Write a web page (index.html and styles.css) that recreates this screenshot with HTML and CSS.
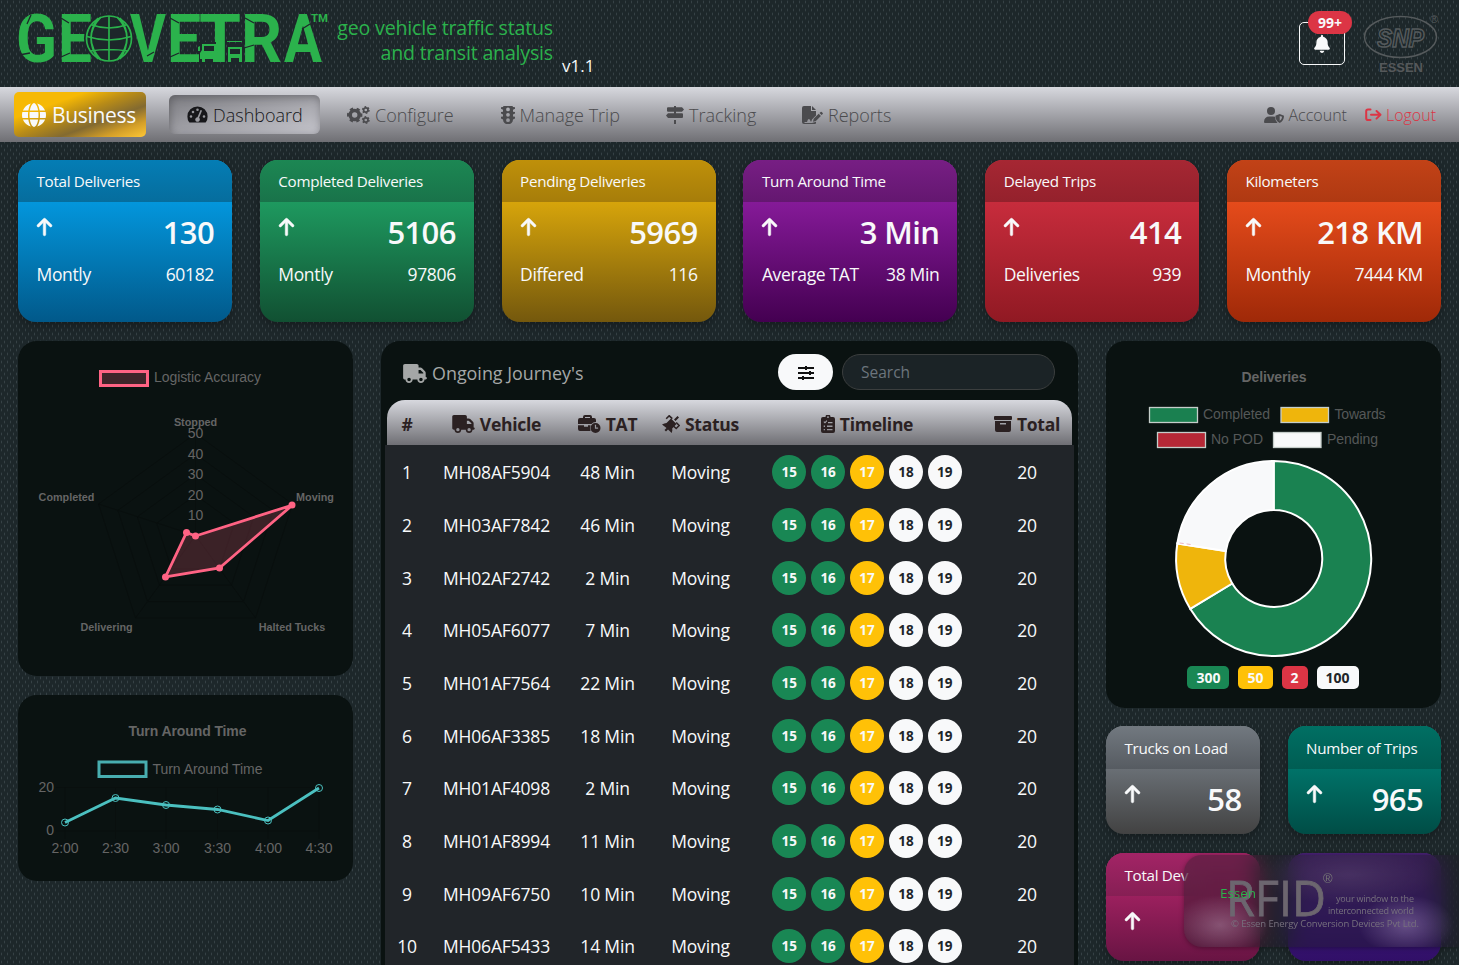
FILE: index.html
```html
<!DOCTYPE html>
<html lang="en">
<head>
<meta charset="utf-8">
<title>Geovetra Dashboard</title>
<link rel="stylesheet" href="styles.css">
</head>
<body>
<svg class="sprite" aria-hidden="true">
  <symbol id="truck" viewBox="0 0 640 512"><path d="M48 0C21.500 0 0 21.500 0 48V368c0 26.500 21.500 48 48 48H64c0 53 43 96 96 96s96-43 96-96H384c0 53 43 96 96 96s96-43 96-96h32c17.700 0 32-14.300 32-32s-14.300-32-32-32V288 256 237.300c0-17-6.700-33.300-18.700-45.300L512 114.700c-12-12-28.300-18.700-45.300-18.700H416V48c0-26.500-21.500-48-48-48H48zM416 160h50.700L544 237.300V256H416V160zM112 416a48 48 0 1 1 96 0 48 48 0 1 1 -96 0zm368-48a48 48 0 1 1 0 96 48 48 0 1 1 0-96z"/></symbol>
  <symbol id="bell" viewBox="0 0 448 512"><path d="M224 0c-17.700 0-32 14.300-32 32V51.200C119 66 64 130.600 64 208v18.800c0 47-17.300 92.400-48.500 127.600l-7.400 8.300c-8.400 9.400-10.400 22.900-5.300 34.400S19.400 416 32 416H416c12.600 0 24-7.400 29.200-18.900s3.100-25-5.300-34.400l-7.400-8.300C401.300 319.200 384 273.900 384 226.800V208c0-77.400-55-142-128-156.800V32c0-17.700-14.300-32-32-32zm45.300 493.300c12-12 18.700-28.300 18.700-45.300H160c0 17 6.700 33.300 18.700 45.300s28.300 18.700 45.300 18.700s33.300-6.700 45.300-18.700z"/></symbol>
  <symbol id="up" viewBox="0 0 384 512"><path stroke="currentColor" stroke-width="14" d="M214.600 41.400c-12.500-12.500-32.800-12.500-45.300 0l-160 160c-12.500 12.500-12.500 32.800 0 45.300s32.800 12.500 45.300 0L160 141.200V448c0 17.700 14.300 32 32 32s32-14.300 32-32V141.200L329.400 246.600c12.500 12.500 32.800 12.500 45.300 0s12.500-32.800 0-45.300l-160-160z"/></symbol>
  <symbol id="globe" viewBox="0 0 512 512"><path d="M352 256c0 22.200-1.200 43.600-3.300 64H163.300c-2.200-20.400-3.300-41.800-3.300-64s1.200-43.600 3.300-64H348.700c2.200 20.400 3.300 41.800 3.300 64zm28.800-64H503.900c5.300 20.500 8.100 41.900 8.100 64s-2.800 43.500-8.100 64H380.800c2.100-20.600 3.200-42 3.200-64s-1.100-43.400-3.200-64zm112.600-32H376.700c-10-63.900-29.800-117.400-55.300-151.600c78.300 20.700 142 77.500 171.900 151.600zm-149.100 0H167.700c6.100-36.400 15.500-68.600 27-94.700c10.500-23.600 22.200-40.700 33.500-51.500C239.400 3.200 248.700 0 256 0s16.600 3.200 27.800 13.800c11.300 10.800 23 27.900 33.500 51.500c11.600 26 20.900 58.200 27 94.700zm-209 0H18.600C48.600 85.900 112.200 29.100 190.600 8.400C165.100 42.600 145.300 96.100 135.300 160zM8.100 192H131.200c-2.100 20.600-3.200 42-3.200 64s1.100 43.400 3.200 64H8.100C2.800 299.500 0 278.100 0 256s2.800-43.500 8.100-64zM194.700 446.600c-11.600-26-20.900-58.200-27-94.600H344.300c-6.100 36.400-15.500 68.600-27 94.600c-10.500 23.600-22.200 40.700-33.500 51.500C272.600 508.800 263.300 512 256 512s-16.600-3.200-27.800-13.800c-11.300-10.800-23-27.900-33.500-51.500zM135.300 352c10 63.900 29.800 117.400 55.300 151.600C112.200 482.900 48.600 426.100 18.600 352H135.300zm358.100 0c-30 74.100-93.600 130.900-171.900 151.600c25.500-34.200 45.200-87.700 55.300-151.600H493.400z"/></symbol>
  <symbol id="gauge" viewBox="0 0 21 17"><path fill-rule="evenodd" d="M2 16Q.4 13.800.4 10.500a10.100 10.100 0 0 1 20.200 0q0 3.300-1.600 5.500-.4.500-1 .500H3q-.6 0-1-.5zM4 9.200a1.300 1.300 0 1 0 0 2.600 1.300 1.300 0 0 0 0-2.600zm2-4.500a1.300 1.300 0 1 0 0 2.600 1.300 1.300 0 0 0 0-2.600zm4.500-2.200a1.300 1.300 0 1 0 0 2.600 1.300 1.300 0 0 0 0-2.600zM17 9.200a1.300 1.300 0 1 0 0 2.600 1.300 1.300 0 0 0 0-2.600zM13.500 4l-3 7.200a2.300 2.300 0 1 0 1.600.6l3-7.200z"/></symbol>
  <symbol id="gears" viewBox="0 0 23 18"><circle cx="7.700" cy="9" r="4.500" fill="none" stroke="currentColor" stroke-width="3.600"/><circle cx="7.700" cy="9" r="6.600" fill="none" stroke="currentColor" stroke-width="2.200" stroke-dasharray="3.450 3.460" stroke-dashoffset="1.700"/><g fill="none" stroke="currentColor"><circle cx="18.800" cy="4" r="2.200" stroke-width="1.700"/><circle cx="18.800" cy="4" r="3.200" stroke-width="1.400" stroke-dasharray="1.680 1.670"/><circle cx="18.800" cy="14" r="2.200" stroke-width="1.700"/><circle cx="18.800" cy="14" r="3.200" stroke-width="1.400" stroke-dasharray="1.680 1.670"/></g></symbol>
  <symbol id="light" viewBox="0 0 14 18"><path fill-rule="evenodd" d="M3 0h8q1 0 1 1l2 .2v1.600l-2 1v2l2 .2v1.600l-2 1v2l2 .2v1.600l-2 1A5 5 0 0 1 2 13.400l-2-1v-1.600l2-.2v-2l-2-1V6l2-.2v-2l-2-1V1.200L2 1q0-1 1-1zm4 1.500a1.900 1.900 0 1 0 0 3.800 1.900 1.900 0 0 0 0-3.800zm0 5.400a1.900 1.900 0 1 0 0 3.800 1.900 1.900 0 0 0 0-3.800zm0 5.400a1.900 1.900 0 1 0 0 3.800 1.900 1.900 0 0 0 0-3.800z"/></symbol>
  <symbol id="sign" viewBox="0 0 18 18"><path d="M8 0h2v1.200h6L18 3.500 16 5.800h-14q-1 0-1-1V2.200q0-1 1-1h6zM8 5.800h2v1.500h6q1 0 1 1v2.600q0 1-1 1H2L0 9.600 2 7.300h6zM8 14h2v4H8z"/></symbol>
  <symbol id="report" viewBox="0 0 21 18"><path d="M2 0h7v5h5v4.500l-4 4-.7 2H8.600q-.4-2.600-1.800-2.500Q5.800 13 5 16H2.500v1H10l4-1.200V17q0 1-1 1H2q-2 0-2-2V2Q0 0 2 0zm8 0 4 4h-4zm1.700 12.800 5-5 2.200 2.200-5 5-2.900.8zM17.500 7l1.200-1.100q.5-.4 1 0l1 1q.4.600 0 1L19.600 9z"/></symbol>
  <symbol id="user" viewBox="0 0 20 16"><circle cx="7" cy="4" r="4"/><path fill-rule="evenodd" d="M0 15Q.2 9.500 5.500 9.500H9q1.300 0 2 .3 0 3.500 2.500 6.200H1q-1 0-1-1zM15.700 7 20 8.700q0 5.200-4.300 7.300-4.300-2.100-4.300-7.300zm0 1.900v5q2.200-1.300 2.400-4.200z"/></symbol>
  <symbol id="exit" viewBox="0 0 17 14"><path fill="none" stroke="currentColor" stroke-width="2" stroke-linecap="round" stroke-linejoin="round" d="M5.500 1.500H3Q1.200 1.500 1.200 3.300v6.900Q1.200 12 3 12h2.500M6 6.800h9M11.500 3l4 3.800-4 3.800"/></symbol>
  <symbol id="case" viewBox="0 0 23 18"><path fill-rule="evenodd" d="M5 3V2q0-2 2-2h5q2 0 2 2v1h2q2 0 2 2v2q-3 .1-4.500 2H0V5q0-2 2-2zm2-1v1h5V2zM0 10.300h6v1.500h4v-1.500h2.500Q11.300 13 12.500 16H2q-2 0-2-2zM17.500 8a5 5 0 1 0 0 10 5 5 0 0 0 0-10zm-.6 1.800h1.200v2.800h2v1.200h-3.200z"/></symbol>
  <symbol id="satellite" viewBox="0 0 18 18"><path d="m4.500 8 4.500-4.500 5.500 5.500-4.300 4.500q.5 1.600-.5 4.500l-3.700-3.500-2 2-1.500-1.500 2-2L0 9.500Q2.500 8 4.500 8zM12 4.500 15.500 1 17 2.500 13.500 6z"/><path fill="none" stroke="currentColor" stroke-width="1.600" d="m4.200 3.800 3-3 3.100 2.900M14.200 7.500l3 3-3 3-2.800-2.500"/></symbol>
  <symbol id="clip" viewBox="0 0 14 18"><path fill-rule="evenodd" d="M2 2h2.500a2.500 2.500 0 0 1 5 0H12q2 0 2 2v12q0 2-2 2H2q-2 0-2-2V4q0-2 2-2zm5-.8A.9.9 0 1 0 7 3a.9.9 0 0 0 0-1.800zM2.500 7l1.500 1.500L6.300 6l-.8-.7L4 7l-.8-.8zM7 7v1.300h4.500V7zM2.700 10.500V12H4v-1.500zm3.300 0V12h5.500v-1.500zM2.700 13.900v1.400H4v-1.400zm3.300 0v1.400h5.500v-1.400z"/></symbol>
  <symbol id="archive" viewBox="0 0 18 16"><path fill-rule="evenodd" d="M1 0h16q1 0 1 1v2q0 1-1 1H1Q0 4 0 3V1q0-1 1-1zM1 5h16v9q0 2-2 2H3q-2 0-2-2zm5 2v1.500h6V7z"/></symbol>
  <symbol id="sliders" viewBox="0 0 16 14"><path fill="none" stroke="currentColor" stroke-width="2" d="M0 2h16M0 7h16M0 12h16"/><path d="M7 0h2v4H7zM11 5h2v4h-2zM4 10h2v4H4z"/></symbol>
</svg>

<header class="top">
  <svg class="logo" width="331" height="87" viewBox="0 0 331 87">
    <g class="logo-text">
      <text x="16" y="62" textLength="41" lengthAdjust="spacingAndGlyphs">G</text>
      <text x="58" y="62" textLength="34" lengthAdjust="spacingAndGlyphs">E</text>
      <text x="130" y="62" textLength="36" lengthAdjust="spacingAndGlyphs">V</text>
      <text x="167" y="62" textLength="34" lengthAdjust="spacingAndGlyphs">E</text>
      <text x="199" y="62" textLength="42" lengthAdjust="spacingAndGlyphs">T</text>
      <text x="241" y="62" textLength="41" lengthAdjust="spacingAndGlyphs">R</text>
      <text x="284" y="62" textLength="38" lengthAdjust="spacingAndGlyphs">A</text>
      <text class="tm" x="311" y="22" textLength="17" lengthAdjust="spacingAndGlyphs">TM</text>
    </g>
    <path class="cut" d="M27 24l4-9M19 55l11-2M61 18l8 5M61 57l9-4M147 56l7-4M170 18l9 5M170 57l9-4M245 18l9 5M302 29l8-5M254 45l-10 3"/>
    <circle class="cut-fill" cx="109" cy="38.500" r="25"/>
    <g class="globe-lines"><circle cx="109" cy="38.500" r="22.500"/><path d="M109 16v45M87 36.500q22 7 44 0M92 25q17 6 34 0M90 51q19-3 38 0M101 17q-20 21 0 43M117 17q20 21 0 43M98 18q-14 20 0 41M120 18q14 20 0 41"/></g>
    <path class="cut-fill" d="M199 42h17v22h-17zM227 44h16v20h-16z"/>
    <g class="logo-vehicles"><path fill-rule="evenodd" d="M202 44h14v6l2 3v6h-2v3h-3v-3h-8v3h-3v-3h-2v-6l2-3zm2 2v5h10v-5zM200 46v5h-2v-4zM228 47h14v15h-3v-4h-8v4h-3zm2 2v5h10v-5zM227 41h15v1h-15z"/></g>
  </svg>
  <p class="tagline">geo vehicle traffic status<br>and transit analysis</p>
  <span class="version">v1.1</span>
  <div class="top-end">
    <button class="bell"><svg width="16" height="18"><use href="#bell"/></svg><span class="bell-count">99+</span></button>
    <svg class="essen" width="80" height="66" viewBox="1362 10 80 66"><g fill="none" stroke="#555a5c" stroke-width="1.500"><ellipse cx="1400.500" cy="37" rx="36" ry="20.500"/><text x="1377" y="46.500" textLength="47" lengthAdjust="spacingAndGlyphs" class="snp">SNP</text></g><text class="reg" x="1430" y="23">®</text><text class="essen-name" x="1379" y="72" textLength="44">ESSEN</text></svg>
  </div>
</header>

<nav class="nav">
  <a class="brand"><svg width="24" height="24"><use href="#globe"/></svg>Business</a>
  <div class="menu">
    <a class="item active"><svg width="21" height="17"><use href="#gauge"/></svg>Dashboard</a>
    <a class="item"><svg width="23" height="18"><use href="#gears"/></svg>Configure</a>
    <a class="item"><svg width="14" height="18"><use href="#light"/></svg>Manage Trip</a>
    <a class="item"><svg width="18" height="18"><use href="#sign"/></svg>Tracking</a>
    <a class="item"><svg width="21" height="18"><use href="#report"/></svg>Reports</a>
  </div>
  <div class="session">
    <a><svg width="20" height="16"><use href="#user"/></svg>Account</a>
    <a class="logout"><svg width="17" height="14"><use href="#exit"/></svg>Logout</a>
  </div>
</nav>

<main>
  <section class="stats">
    <article class="stat blue"><h2>Total Deliveries</h2><div class="big"><svg class="arrow"><use href="#up"/></svg><b>130</b></div><div class="sub"><span>Montly</span><span>60182</span></div></article>
    <article class="stat green"><h2>Completed Deliveries</h2><div class="big"><svg class="arrow"><use href="#up"/></svg><b>5106</b></div><div class="sub"><span>Montly</span><span>97806</span></div></article>
    <article class="stat gold"><h2>Pending Deliveries</h2><div class="big"><svg class="arrow"><use href="#up"/></svg><b>5969</b></div><div class="sub"><span>Differed</span><span>116</span></div></article>
    <article class="stat purple"><h2>Turn Around Time</h2><div class="big"><svg class="arrow"><use href="#up"/></svg><b>3 Min</b></div><div class="sub"><span>Average TAT</span><span>38 Min</span></div></article>
    <article class="stat red"><h2>Delayed Trips</h2><div class="big"><svg class="arrow"><use href="#up"/></svg><b>414</b></div><div class="sub"><span>Deliveries</span><span>939</span></div></article>
    <article class="stat orange"><h2>Kilometers</h2><div class="big"><svg class="arrow"><use href="#up"/></svg><b>218 KM</b></div><div class="sub"><span>Monthly</span><span>7444 KM</span></div></article>
  </section>

  <section class="board">
    <div class="column">
      <div class="panel">
        <svg class="chart" width="335" height="335" viewBox="18 341 335 335">
          <rect x="100.500" y="371.500" width="47" height="14" fill="#3f252a" stroke="#ff6384" stroke-width="3"/>
          <text x="154" y="382" textLength="107">Logistic Accuracy</text>
          <g class="grid"><path d="M195.500 433.500l97 70.500-37 114h-120l-37-114zM195.500 454l77.600 56.400-29.600 91.200h-96l-29.600-91.200zM195.500 474.500l58.200 42.300-22.200 68.400h-72l-22.200-68.400zM195.500 495l38.800 28.200-14.800 45.600h-48l-14.800-45.600zM195.500 535.500v-102M195.500 535.500l97-31.500M195.500 535.500l60 82.500M195.500 535.500l-60 82.500M195.500 535.500l-97-31.500"/></g>
          <path d="M195.500 536 292.500 505 219.500 568 165.500 577 186.500 532.500z" fill="#ff6384" fill-opacity=".2" stroke="#ff6384" stroke-width="2.800"/>
          <g fill="#ff6384"><circle cx="195.500" cy="536" r="3.500"/><circle cx="292" cy="505" r="3.500"/><circle cx="219.500" cy="568" r="3.500"/><circle cx="165.500" cy="577" r="3.500"/><circle cx="186.500" cy="532.500" r="3.500"/></g>
          <g text-anchor="middle"><text x="195.500" y="438">50</text><text x="195.500" y="458.500">40</text><text x="195.500" y="479">30</text><text x="195.500" y="499.500">20</text><text x="195.500" y="519.500">10</text></g>
          <g class="point" text-anchor="middle"><text x="195.500" y="426">Stopped</text><text x="315" y="500.500">Moving</text><text x="292" y="631">Halted Tucks</text><text x="106.500" y="631">Delivering</text><text x="66.500" y="500.500">Completed</text></g>
        </svg>
      </div>
      <div class="panel">
        <svg class="chart" width="335" height="186" viewBox="18 695 335 186">
          <text class="title" x="128.500" y="736" textLength="118">Turn Around Time</text>
          <rect x="99" y="762" width="47" height="14.500" fill="none" stroke="#48aeb0" stroke-width="3"/>
          <text x="152.500" y="773.500" textLength="110">Turn Around Time</text>
          <g class="grid"><path d="M56 787.500h263M56 831h263M65 787v52M115.500 787v52M166 787v52M217.500 787v52M268 787v52M319 787v52"/></g>
          <path d="M65 822.500 115.500 798 166 805 217.500 809.500 268 820.500 319 788" fill="none" stroke="#4bc0c0" stroke-width="2.800"/>
          <g fill="none" stroke="#4bc0c0"><circle cx="65" cy="822.500" r="3.500"/><circle cx="115.500" cy="798" r="3.500"/><circle cx="166" cy="805" r="3.500"/><circle cx="217.500" cy="809.500" r="3.500"/><circle cx="268" cy="820.500" r="3.500"/><circle cx="319" cy="788" r="3.500"/></g>
          <g text-anchor="end"><text x="54" y="791.500">20</text><text x="54" y="834.500">0</text></g>
          <g text-anchor="middle"><text x="65" y="853">2:00</text><text x="115.500" y="853">2:30</text><text x="166" y="853">3:00</text><text x="217.500" y="853">3:30</text><text x="268.500" y="853">4:00</text><text x="319" y="853">4:30</text></g>
        </svg>
      </div>
    </div>

    <div class="panel journeys">
      <div class="journeys-head">
        <h3><svg width="24" height="19"><use href="#truck"/></svg>Ongoing Journey's</h3>
        <button class="filter"><svg width="16" height="14"><use href="#sliders"/></svg></button>
        <input class="search" placeholder="Search">
      </div>
      <div class="row head">
        <span>#</span>
        <span><svg width="23" height="18"><use href="#truck"/></svg>Vehicle</span>
        <span><svg width="23" height="18"><use href="#case"/></svg>TAT</span>
        <span><svg width="18" height="18"><use href="#satellite"/></svg>Status</span>
        <span><svg width="14" height="18"><use href="#clip"/></svg>Timeline</span>
        <span><svg width="18" height="16"><use href="#archive"/></svg>Total</span>
      </div>
      <div class="rows" id="rows"></div>
    </div>

    <div class="column">
      <div class="panel">
        <svg class="chart" width="335" height="325" viewBox="1106 341 335 325">
          <text class="title" x="1241.500" y="382" textLength="65">Deliveries</text>
          <g stroke="#c5cdca" stroke-width="1.300"><rect x="1149.500" y="407.500" width="48" height="15" fill="#1a8050"/><rect x="1281" y="407.500" width="47.500" height="15" fill="#efb50c"/><rect x="1157.500" y="432.500" width="48" height="15" fill="#b52836"/><rect x="1273.500" y="432.500" width="47.500" height="15" fill="#f8f9fa"/></g>
          <g class="legend"><text x="1203" y="419" textLength="67">Completed</text><text x="1334.500" y="419" textLength="51">Towards</text><text x="1211" y="444" textLength="52">No POD</text><text x="1327" y="444" textLength="51">Pending</text></g>
          <g transform="translate(1273.700 558.500)" stroke="#fff" stroke-width="2">
            <path fill="#1a8251" d="M0-97.500A97.500 97.500 0 1 1-83.500 50.300L-41.500 25A48.500 48.500 0 1 0 0-48.500z"/>
            <path fill="#efb50c" d="M-83.500 50.300A97.500 97.500 0 0 1-96.400-15L-47.900-7.400A48.500 48.500 0 0 0-41.500 25z"/>
            <path fill="#f8f9fa" d="M-96.400-15A97.500 97.500 0 0 1 0-97.500V-48.500A48.500 48.500 0 0 0-47.900-7.400z"/>
            <path fill="none" stroke="#e8a0a8" stroke-width=".8" stroke-dasharray="4 3" d="M-94-15.500-83-14"/>
          </g>
        </svg>
        <div class="badges"><b class="bg-green">300</b><b class="bg-yellow">50</b><b class="bg-red">2</b><b class="bg-light">100</b></div>
      </div>
      <div class="minis">
        <article class="stat mini gray"><h2>Trucks on Load</h2><div class="big"><svg class="arrow"><use href="#up"/></svg><b>58</b></div></article>
        <article class="stat mini teal"><h2>Number of Trips</h2><div class="big"><svg class="arrow"><use href="#up"/></svg><b>965</b></div></article>
        <article class="stat mini pink"><h2>Total Dev</h2><div class="big"><svg class="arrow"><use href="#up"/></svg></div></article>
        <article class="stat mini violet"><h2></h2></article>
      </div>
    </div>
  </section>
</main>

<footer class="credit">
  <svg width="275" height="92" viewBox="1184 855 275 92">
    <text class="rfid" x="1226" y="916" textLength="100" lengthAdjust="spacingAndGlyphs">RFID</text>
    <text class="rfid-reg" x="1323" y="883">®</text>
    <text class="essen-green" x="1220" y="898" textLength="36">Essen</text>
    <g class="slogan"><text x="1336" y="902" textLength="78">your window to the</text><text x="1328" y="913.500" textLength="86">interconnected world</text></g>
    <text class="copy" x="1231" y="927" textLength="188">© Essen Energy Conversion Devices Pvt Ltd.</text>
  </svg>
</footer>
<script src="app.js"></script>
</body>
</html>
```

FILE: styles.css
```css
* { box-sizing: border-box; }
body {
  margin: 0;
  height: 965px;
  overflow: hidden;
  font-family: "Open Sans", "Noto Sans", sans-serif;
  color: #f8f9fa;
  background-color: #1d272a;
  background-image: radial-gradient(ellipse 1px 1.700px at 1.500px 2px, #364145 60%, transparent), radial-gradient(ellipse 1px 1.700px at 4.500px 6px, #364145 60%, transparent);
  background-size: 6px 8px;
}
svg { fill: currentColor; flex: none; }
.sprite { position: absolute; width: 0; height: 0; }
h2, h3, p { margin: 0; font-weight: 400; }
button, input { font: inherit; }

.top { display: flex; height: 87px; }
.logo { display: block; }
.logo-text { font: 700 67.500px Roboto, sans-serif; fill: #2bb24c; }
.logo-text .tm { font-size: 11.500px; font-weight: 700; }
.cut { fill: none; stroke: #1d272a; stroke-width: 1.300; }
.cut-fill { fill: #1d272a; }
.globe-lines { fill: none; stroke: #2bb24c; stroke-width: 1.700; }
.logo-vehicles { fill: #2bb24c; }
.tagline { width: 222px; padding-top: 15px; font-size: 19.600px; letter-spacing: -.01em; line-height: 25px; text-align: right; white-space: nowrap; color: #2bb24c; }
.version { padding: 53px 0 0 9px; font-size: 17px; font-weight: 500; line-height: 26px; }
.top-end { display: flex; margin-left: auto; padding-right: 17px; }
.bell { position: relative; display: flex; align-items: center; justify-content: center; width: 46px; height: 43px; margin: 22px 17px 0 0; border: 1px solid #f8f9fa; border-radius: 5px; background: transparent; color: #f8f9fa; }
.bell-count { position: absolute; top: -12px; right: -8px; width: 44px; height: 23px; border-radius: 12px; background: #dc3545; font-size: 14px; font-weight: 700; line-height: 23px; text-align: center; }
.essen { margin-top: 10px; }
.snp { font: italic 700 25px "Liberation Sans", sans-serif; }
.reg { font: 11px "Liberation Sans", sans-serif; fill: #555a5c; }
.essen-name { font: 700 13px "Liberation Sans", sans-serif; fill: #55585a; }

.nav { display: flex; align-items: center; height: 55px; padding-left: 14px; background: linear-gradient(#d7d8de, #6f6f74); color: #4b4b4e; }
.brand { display: flex; align-items: center; gap: 6px; width: 132px; height: 45px; padding-left: 8px; border-radius: 5px; color: #f8f9fa; font-size: 21px; font-weight: 500; letter-spacing: -.015em; white-space: nowrap; background: linear-gradient(160deg, #f6b905 28%, #b98c17 47%, #836a30 66%, #d39e28 83%, #ffc735); }
.menu { display: grid; grid-template-columns: 160px 153.500px 165.500px 136px 125px; margin-left: 23px; font-size: 18px; font-weight: 300; }
.item { display: flex; align-items: center; gap: 5px; height: 39px; padding-left: 18px; border-radius: 6px; white-space: nowrap; }
.item.active { width: 151px; color: #17171a; background: linear-gradient(165deg, #7d7d82, #c6c6cd); box-shadow: inset 1px 2px 9px rgba(65, 65, 70, .5); }
.session { display: flex; gap: 18px; margin-left: auto; padding-right: 23px; font-size: 16px; font-weight: 300; }
.session a { display: flex; align-items: center; gap: 4px; }
.session .logout { color: #dc3545; }

main { padding: 18px 18px 0; }
.stats { display: grid; grid-template-columns: repeat(6, 1fr); column-gap: 27.800px; }
.stat { height: 162px; overflow: hidden; border-radius: 18px; background: linear-gradient(var(--a) 26%, var(--b)); box-shadow: 0 3px 8px rgba(0, 0, 0, .3); }
.stat h2 { height: 42px; padding: 0 18.500px; background: linear-gradient(var(--h), var(--g)); font-size: 15.200px; font-weight: 500; letter-spacing: -.02em; line-height: 43px; white-space: nowrap; }
.big { display: flex; justify-content: space-between; padding: 11px 18px 0; line-height: 38px; }
.big b { font-size: 31px; font-weight: 600; letter-spacing: -.02em; white-space: nowrap; }
.arrow { width: 17px; height: 20px; margin: 3.500px 0 0; }
.sub { display: flex; justify-content: space-between; padding: 10px 18px 0 18.500px; font-size: 17.500px; font-weight: 500; letter-spacing: -.02em; line-height: 26px; white-space: nowrap; }
.blue { --h: #047db5; --g: #066d9d; --a: #0396dc; --b: #01598a; }
.green { --h: #1c8753; --g: #19734a; --a: #1e995f; --b: #115032; }
.gold { --h: #bf900a; --g: #a67d0a; --a: #d6a40b; --b: #74580d; }
.purple { --h: #771e84; --g: #641770; --a: #851a98; --b: #440051; }
.red { --h: #a62733; --g: #94212c; --a: #c72c3c; --b: #901923; }
.orange { --h: #c24217; --g: #af3912; --a: #e54b1b; --b: #9f2908; }

.board { display: grid; grid-template-columns: 335px 1fr 335px; gap: 28px; margin-top: 19px; }
.column { display: flex; flex-direction: column; gap: 19px; }
.panel { border-radius: 19px; background: #0a1211; }
.column .panel { overflow: hidden; }
.chart { display: block; font: 14px "Liberation Sans", sans-serif; fill: #666; }
.chart text { fill: #656565; }
.chart .legend text { fill: #555858; }
.chart .title { font-weight: 700; }
.chart .point text { font-size: 10.800px; font-weight: 700; }
.grid { fill: none; stroke: #090f0e; stroke-width: 1; }
.badges { display: flex; justify-content: center; gap: 9px; height: 42px; padding-right: 1px; }
.badges b { height: 23px; padding: 0 9px; border-radius: 5px; font-size: 14px; line-height: 23px; }
.bg-green { background: #198754; }
.bg-yellow { background: #ffc107; }
.bg-red { background: #dc3545; }
.bg-light { background: #f8f9fa; color: #212529; }
.minis { display: grid; grid-template-columns: 1fr 1fr; gap: 19px 28px; margin-top: -1px; }
.mini { height: 108px; }
.mini h2 { height: 43px; line-height: 45px; }
.gray { --h: #727980; --g: #565b61; --a: #727980; --b: #424242; }
.teal { --h: #006f63; --g: #005d53; --a: #007b70; --b: #004d46; }
.pink { --h: #a32466; --g: #861f54; --a: #a72364; --b: #681443; }
.violet { --h: #462171; --g: #3c1a68; --a: #40207d; --b: #310f68; }

.journeys { height: 660px; padding: 0 4px; }
.journeys-head { display: flex; align-items: center; height: 59px; padding-top: 3px; padding-left: 18px; }
.journeys-head h3 { display: flex; align-items: center; gap: 5px; width: 375px; padding-top: 2px; color: #a5a7a7; font-size: 17.900px; }
.filter { width: 55px; height: 36px; padding: 4px 0 0; border: 0; border-radius: 18px; background: #f8f9fa; color: #111; }
.search { width: 213px; height: 36px; margin-left: 9px; padding: 0 18px; border: 1px solid #3b3e3e; border-radius: 18px; background: #1b2326; font-size: 15.500px; }
.search::placeholder { color: #6c757d; }
.row { display: grid; grid-template-columns: 40px 139px 83px 103px 230px 90px; align-items: center; justify-items: center; white-space: nowrap; }
.head { height: 45px; margin: 0 2px; padding-top: 2px; border-radius: 18px 18px 0 0; background: linear-gradient(#d7d8de, #6f6f74); color: #2b2122; font-size: 17.500px; font-weight: 700; letter-spacing: -.015em; }
.head span { display: flex; align-items: center; gap: 5px; }
.rows { padding-top: 1px; background: #212529; font-size: 17.500px; font-weight: 500; letter-spacing: -.01em; }
.rows .row { height: 52.670px; padding: 0 2px; }
.days { display: flex; gap: 4.900px; letter-spacing: 0; }
.days b { width: 34px; height: 34px; border-radius: 50%; font-size: 13.500px; line-height: 34px; text-align: center; }

.credit { position: absolute; right: 0; top: 855px; width: 275px; height: 92px; overflow: hidden; border-radius: 18px 0 0 18px; backdrop-filter: blur(12px); background: radial-gradient(ellipse 48px 30px at 36px 70px, rgba(190, 160, 185, .42), transparent), radial-gradient(ellipse 48px 30px at 222px 70px, rgba(180, 155, 205, .42), transparent), radial-gradient(ellipse 90px 30px at 165px 20px, rgba(160, 140, 175, .18), transparent), rgba(28, 27, 34, .38); box-shadow: 0 1px 5px rgba(0, 0, 0, .35); }
.rfid { font: 49px "Open Sans", sans-serif; fill: #6c666f; stroke: #6c666f; stroke-width: .8; }
.rfid-reg { font: 13px "Liberation Sans", sans-serif; fill: #777; }
.essen-green { font-size: 13.500px; fill: #2bb24c; }
.slogan { font-size: 9px; fill: #77717e; }
.copy { font-size: 9.500px; fill: #77717e; }
```

FILE: app.js
```javascript
const journeys = [
  ["MH08AF5904", 48], ["MH03AF7842", 46], ["MH02AF2742", 2], ["MH05AF6077", 7], ["MH01AF7564", 22],
  ["MH06AF3385", 18], ["MH01AF4098", 2], ["MH01AF8994", 11], ["MH09AF6750", 10], ["MH06AF5433", 14]
];
const days = [[15, "bg-green"], [16, "bg-green"], [17, "bg-yellow"], [18, "bg-light"], [19, "bg-light"]];

document.getElementById("rows").innerHTML = journeys.map(([vehicle, minutes], i) => `
  <div class="row">
    <span>${i + 1}</span><span>${vehicle}</span><span>${minutes} Min</span><span>Moving</span>
    <span class="days">${days.map(([day, tone]) => `<b class="${tone}">${day}</b>`).join("")}</span>
    <span>20</span>
  </div>`).join("");
```
